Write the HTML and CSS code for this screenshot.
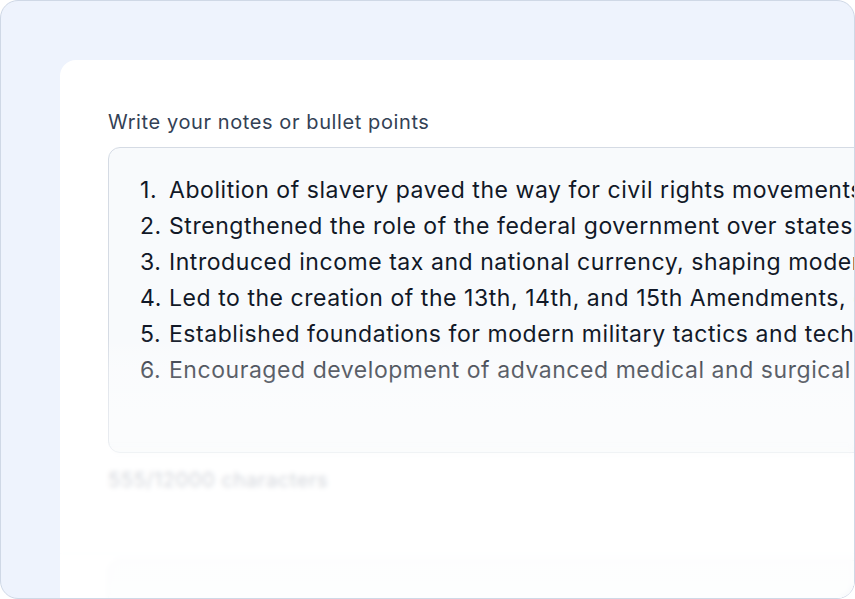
FILE: index.html
```html
<!DOCTYPE html>
<html lang="en">
<head>
    <meta charset="UTF-8">
    <meta name="viewport" content="width=device-width, initial-scale=1.0">
    <title>Notes</title>
    <link rel="stylesheet" href="styles.css">
</head>
<body>
    <div class="frame">
        <div class="card">
            <label class="field-label" for="notes">Write your notes or bullet points</label>
            <div class="notes" id="notes">
                <div class="line"><span class="num">1.</span>Abolition of slavery paved the way for civil rights movements and equality efforts.</div>
                <div class="line"><span class="num">2.</span>Strengthened the role of the federal government over states' rights.</div>
                <div class="line"><span class="num">3.</span>Introduced income tax and national currency, shaping modern finance.</div>
                <div class="line"><span class="num">4.</span>Led to the creation of the 13th, 14th, and 15th Amendments, expanding rights.</div>
                <div class="line"><span class="num">5.</span>Established foundations for modern military tactics and technology.</div>
                <div class="line"><span class="num">6.</span>Encouraged development of advanced medical and surgical practices.</div>
            </div>
            <div class="counter">555/12000 characters</div>
        </div>
        <div class="lower">
            <div class="next-box"></div>
        </div>
        <!-- fade + blur over the lower part -->
        <div class="fade"></div>
        <div class="blur"></div>
    </div>
</body>
</html>
```

FILE: styles.css
```css
body {
    margin: 0;
    background: #fff;
    font-family: 'Inter', 'Noto Sans', sans-serif;
    font-variation-settings: "opsz" 14;
}

.frame {
    position: relative;
    width: 855px;
    height: 599px;
    box-sizing: border-box;
    border: 1px solid #cfd8e6;
    border-radius: 18px;
    background: #eef3fd;
    overflow: hidden;
    padding: 59px 0 0 59px;
}

.card {
    width: 1200px;
    height: 493px;
    background: #fff;
    border-radius: 16px 0 0 0;
    padding: 48px 48px 0;
    box-sizing: border-box;
}

.field-label {
    display: block;
    font-size: 20px;
    line-height: 28px;
    letter-spacing: 0.6px;
    color: #334155;
    margin-bottom: 11px;
}

.notes {
    width: 1000px;
    height: 306px;
    box-sizing: border-box;
    background: #f8fafc;
    border: 1px solid #d5dbe4;
    border-radius: 12px;
    padding: 24px 31px;
    font-size: 23px;
    line-height: 36px;
    letter-spacing: 0.55px;
    color: #111827;
}

.line {
    white-space: nowrap;
}

.num {
    display: inline-block;
    width: 29px;
}

.counter {
    margin-top: 14px;
    font-size: 20px;
    line-height: 26px;
    letter-spacing: 0.6px;
    color: #9ca3af;
}

.lower {
    width: 1200px;
    height: 100px;
    background: #fff;
    border-top: 1px solid #f1f4f8;
    padding: 6px 48px 0;
    box-sizing: border-box;
}

.next-box {
    width: 900px;
    height: 80px;
    border: 1px solid #e2e8f0;
    border-radius: 12px;
    background: #f8fafc;
}

.fade {
    position: absolute;
    left: 59px;
    right: 0;
    top: 335px;
    bottom: 0;
    background: linear-gradient(to bottom, rgba(255, 255, 255, 0) 0%, rgba(255, 255, 255, 0.3) 13%, rgba(255, 255, 255, 0.5) 45%, rgba(255, 255, 255, 0.78) 100%);
    pointer-events: none;
}

.blur {
    position: absolute;
    left: 59px;
    right: 0;
    top: 440px;
    bottom: 0;
    backdrop-filter: blur(2.5px);
    -webkit-mask-image: linear-gradient(to bottom, transparent 0, #000 30px);
    mask-image: linear-gradient(to bottom, transparent 0, #000 30px);
    pointer-events: none;
}
```
